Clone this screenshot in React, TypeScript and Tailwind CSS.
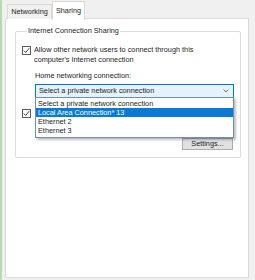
import React from 'react';

const font = "font-['Liberation_Sans',Arial,sans-serif]";

function Check({ className = '' }: { className?: string }) {
  return (
    <span className={`flex h-[9px] w-[9px] shrink-0 items-center justify-center border border-[#5a5a5a] bg-white ${className}`}>
      <svg width="7" height="7" viewBox="0 0 7 7" fill="none">
        <path d="M0.8 3.6 L2.7 5.5 L6.2 1.2" stroke="#2a2a2a" strokeWidth="0.9" />
      </svg>
    </span>
  );
}

export default function App() {
  const items = ['Select a private network connection', 'Local Area Connection* 13', 'Ethernet 2', 'Ethernet 3'];

  return (
    <div className={`flex h-[280px] w-[255px] flex-col overflow-hidden border-l-2 border-[#b4dbb4] bg-[#f0f0f0] pb-[2px] pl-[3px] pr-[6px] text-[7.3px] leading-[9.5px] text-[#1c1c1c] ${font}`}>
      {/* tabs */}
      <div className="z-10 flex h-[19px] items-end pl-[2px]">
        <div className="flex h-[15px] w-[45px] items-center justify-center border border-b-0 border-[#d9d9d9] bg-[#f0f0f0]">
          Networking
        </div>
        <div className="-mb-px flex h-[19px] w-[33px] items-start justify-center border border-b-0 border-[#d9d9d9] bg-white pt-[4px]">
          Sharing
        </div>
      </div>

      {/* page */}
      <div className="-mt-px flex-1 border border-[#d9d9d9] bg-white pl-[9px] pr-[7px] pt-[7px]">
        <fieldset className="rounded-[2px] border border-[#dcdcdc] pb-[7px] pl-[6px] pr-[6px]">
          <legend className="ml-[5px] px-[1px] leading-[10px]">Internet Connection Sharing</legend>

          <div className="mt-[9px] flex gap-[3px]">
            <Check className="mt-[1px]" />
            <p>
              Allow other network users to connect through this
              <br />
              computer's Internet connection
            </p>
          </div>

          <div className="pl-[13px]">
            <p className="mt-[7px]">Home networking connection:</p>

            <div className="relative mt-[3px]">
              <div className="flex h-[14px] items-center justify-between border border-[#0078d7] bg-[#e5f1fb] pl-[3px] pr-[4px]">
                <span>Select a private network connection</span>
                <svg width="6" height="4" viewBox="0 0 6 4" fill="none">
                  <path d="M0.5 0.5 L3 3 L5.5 0.5" stroke="#555" strokeWidth="0.8" />
                </svg>
              </div>

              {/* open list */}
              <div className="absolute left-0 right-0 top-[13px] z-20 border border-[#6d8fb5] bg-white pb-[2px] shadow-[2px_2px_2px_rgba(0,0,0,0.25)]">
                {items.map((item, i) => (
                  <div
                    key={item}
                    className={`h-[9px] pl-[2px] leading-[9px] ${i === 0 ? 'mt-[1px]' : ''} ${i === 1 ? 'bg-[#0a7ad8] text-white' : ''}`}
                  >
                    {item}
                  </div>
                ))}
              </div>
            </div>
          </div>

          {/* second option, its label is hidden under the open list */}
          <div className="mt-[11px] flex">
            <Check />
          </div>

          <div className="mt-[20px] flex justify-end pr-[1px]">
            <button className="h-[12px] w-[51px] border border-[#adadad] bg-[#e1e1e1] text-[7.3px] leading-[10px]">
              Settings...
            </button>
          </div>
        </fieldset>
      </div>
    </div>
  );
}
